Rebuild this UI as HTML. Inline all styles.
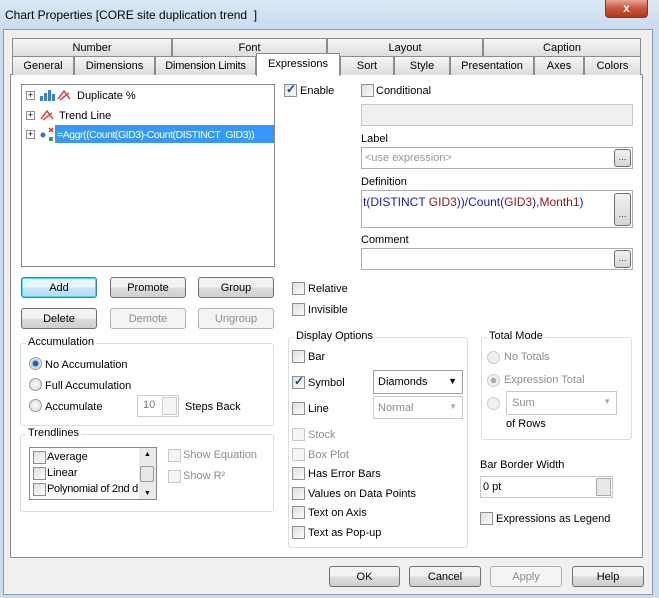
<!DOCTYPE html>
<html><head><style>
*{box-sizing:border-box;margin:0;padding:0}
body{width:659px;height:598px;background:#c9dcf0;font-family:"Liberation Sans",sans-serif;font-size:11px;color:#000;position:relative;overflow:hidden}
.a{position:absolute}
.t{position:absolute;white-space:nowrap;font-size:11px;margin-top:1px}
.tab{position:absolute;height:19px;border:1px solid #8c8c8c;border-bottom:none;background:linear-gradient(#f6f6f6,#dcdcdc);text-align:center;line-height:18px;font-size:11px}
.cb{position:absolute;width:13px;height:13px;border:1px solid #8e8f8f;background:linear-gradient(135deg,#e0e0e0,#fafafa)}
.cb.d{border-color:#c8c8c8;background:#f4f4f4}
.ck::after{content:"✓";position:absolute;left:1px;top:-3px;font-size:12px;color:#27408f;font-weight:bold}
.btn{position:absolute;height:21px;border:1px solid #707070;border-radius:3px;background:linear-gradient(#f2f2f2 50%,#dddddd 50%,#cfcfcf);text-align:center;line-height:21px;font-size:11px}
.btn.dis{border-color:#adb2b5;background:#f4f4f4;color:#8d8d8d}
.grp{position:absolute;border:1px solid #d5dfe5;border-radius:3px}
.gl{position:absolute;background:#fff;padding:0 2px;top:-8px;left:5px;font-size:11px}
.rd{position:absolute;width:13px;height:13px;border-radius:50%;border:1px solid #9a9a9a;background:radial-gradient(#fafafa,#d8d8d8)}
.inp{position:absolute;border:1px solid #abadb3;background:#fff}
.db{position:absolute;width:17px;border:1px solid #707070;border-radius:3px;background:linear-gradient(#f2f2f2,#d5d5d5);font-size:9px;text-align:center;color:#333}
.g{color:#8d8d8d}
</style></head><body>
<div class="a" style="left:0;top:0;width:659px;height:30px;background:linear-gradient(#dae8f5,#c8dbef)"></div>
<div class="t" style="left:5px;top:7px;font-size:12px">Chart Properties [CORE site duplication trend&nbsp; ]</div>
<div class="a" style="left:605px;top:0;width:43px;height:18px;border:1px solid #7a3a2e;border-top:none;border-radius:0 0 4px 4px;background:linear-gradient(#e8a393,#c9543b 50%,#b2381f);color:#fff;text-align:center;font-weight:bold;font-size:12px;line-height:16px">x</div>
<div class="a" style="left:3px;top:29px;width:650px;height:566px;border:1px solid #8c9aaa;background:#f0f0f0"></div>
<div class="a" style="left:10px;top:74px;width:633px;height:484px;background:#fff;border:1px solid #898c95"></div>
<div class="tab" style="left:12px;top:38px;width:160px">Number</div>
<div class="tab" style="left:172px;top:38px;width:155px">Font</div>
<div class="tab" style="left:327px;top:38px;width:156px">Layout</div>
<div class="tab" style="left:483px;top:38px;width:158px">Caption</div>
<div class="tab" style="left:12px;top:56px;width:62px">General</div>
<div class="tab" style="left:74px;top:56px;width:81px">Dimensions</div>
<div class="tab" style="left:155px;top:56px;width:101px;letter-spacing:-0.2px">Dimension Limits</div>
<div class="tab" style="left:340px;top:56px;width:54px">Sort</div>
<div class="tab" style="left:394px;top:56px;width:56px">Style</div>
<div class="tab" style="left:450px;top:56px;width:84px">Presentation</div>
<div class="tab" style="left:534px;top:56px;width:50px">Axes</div>
<div class="tab" style="left:584px;top:56px;width:57px">Colors</div>
<div class="tab" style="left:256px;top:53px;width:84px;height:23px;background:#fff;line-height:20px">Expressions</div>
<div class="a" style="left:21px;top:84px;width:254px;height:183px;border:1px solid #828790;background:#fff"></div>
<div class="a" style="left:26px;top:91px;width:9px;height:9px;border:1px solid #919191;font-size:9px;line-height:7px;text-align:center">+</div>
<div class="a" style="left:40px;top:90px;width:15px;height:11px"><svg width="15" height="11"><rect x="0" y="6" width="3" height="5" fill="#3a7fd0"/><rect x="4" y="3" width="3" height="8" fill="#3a7fd0"/><rect x="8" y="0" width="3" height="11" fill="#3a7fd0"/><rect x="12" y="4" width="3" height="7" fill="#3a7fd0"/></svg></div>
<svg class="a" style="left:57px;top:88px" width="15" height="13"><path d="M1 11 L7 3 L13 11 M3 12 L12 5" stroke="#d24a4a" stroke-width="1.5" fill="none"/></svg>
<div class="t" style="left:77px;top:89px">Duplicate %</div>
<div class="a" style="left:26px;top:111px;width:9px;height:9px;border:1px solid #919191;font-size:9px;line-height:7px;text-align:center">+</div>
<svg class="a" style="left:40px;top:108px" width="15" height="13"><path d="M1 11 L7 3 L13 11 M3 12 L12 5" stroke="#d24a4a" stroke-width="1.5" fill="none"/></svg>
<div class="t" style="left:59px;top:109px">Trend Line</div>
<div class="a" style="left:26px;top:130px;width:9px;height:9px;border:1px solid #919191;font-size:9px;line-height:7px;text-align:center">+</div>
<svg class="a" style="left:40px;top:127px" width="14" height="14"><circle cx="3" cy="8" r="2.5" fill="#3a6fc0"/><rect x="9" y="10" width="4" height="4" fill="#3aa040"/><path d="M9 1 L13 5 M13 1 L9 5" stroke="#d03030" stroke-width="1.3"/></svg>
<div class="a" style="left:55px;top:125px;width:219px;height:18px;background:#3399ff"></div>
<div class="t" style="left:57px;top:128px;color:#fff;letter-spacing:-0.45px;font-size:10.5px">=Aggr((Count(GID3)-Count(DISTINCT&nbsp; GID3))</div>
<div class="btn" style="left:21px;top:277px;width:76px;border-color:#3c7fb1;background:linear-gradient(#eaf6fd 50%,#c4e5f6 50%,#b6dcf2);box-shadow:inset 0 0 0 1px #48d8fb">Add</div>
<div class="btn" style="left:110px;top:277px;width:76px">Promote</div>
<div class="btn" style="left:198px;top:277px;width:76px">Group</div>
<div class="btn" style="left:21px;top:308px;width:76px">Delete</div>
<div class="btn dis" style="left:110px;top:308px;width:76px">Demote</div>
<div class="btn dis" style="left:198px;top:308px;width:76px">Ungroup</div>
<div class="grp" style="left:20px;top:343px;width:254px;height:83px"><div class="gl">Accumulation</div></div>
<div class="rd" style="left:29px;top:357px;background:radial-gradient(#1d5ea8 30%,#9ec6ea 40%,#e8f0f8 70%)"></div>
<div class="t" style="left:45px;top:358px">No Accumulation</div>
<div class="rd" style="left:29px;top:378px"></div>
<div class="t" style="left:45px;top:379px">Full Accumulation</div>
<div class="rd" style="left:29px;top:399px"></div>
<div class="t" style="left:45px;top:400px">Accumulate</div>
<div class="inp" style="left:137px;top:395px;width:42px;height:22px;border-color:#ccc;color:#777;padding:3px 0 0 5px">10</div>
<div class="a" style="left:162px;top:397px;width:15px;height:18px;border:1px solid #ccc;background:#f4f4f4"></div>
<div class="t" style="left:185px;top:400px">Steps Back</div>
<div class="grp" style="left:20px;top:434px;width:254px;height:78px"><div class="gl">Trendlines</div></div>
<div class="a" style="left:29px;top:447px;width:128px;height:53px;border:1px solid #828790;background:#fff;overflow:hidden"></div>
<div class="cb" style="left:33px;top:451px"></div><div class="t" style="left:47px;top:450px">Average</div>
<div class="cb" style="left:33px;top:467px"></div><div class="t" style="left:47px;top:466px">Linear</div>
<div class="cb" style="left:33px;top:483px"></div><div class="t" style="left:47px;top:482px;letter-spacing:-0.3px">Polynomial of 2nd d</div>
<div class="a" style="left:139px;top:448px;width:17px;height:51px;background:#eaeaea"></div>
<div class="a" style="left:140px;top:466px;width:14px;height:16px;border:1px solid #999;border-radius:2px;background:#e8e8e8"></div>
<div class="t" style="left:144px;top:450px;font-size:7px">▲</div><div class="t" style="left:144px;top:489px;font-size:7px">▼</div>
<div class="cb d" style="left:168px;top:449px"></div><div class="t g" style="left:183px;top:448px">Show Equation</div>
<div class="cb d" style="left:168px;top:470px"></div><div class="t g" style="left:183px;top:469px">Show R²</div>
<div class="cb ck" style="left:284px;top:84px"></div><div class="t" style="left:300px;top:84px">Enable</div>
<div class="cb" style="left:361px;top:84px"></div><div class="t" style="left:376px;top:84px">Conditional</div>
<div class="inp" style="left:361px;top:104px;width:272px;height:22px;background:#f0f0f0;border-color:#c8c8c8"></div>
<div class="t" style="left:361px;top:132px">Label</div>
<div class="inp" style="left:361px;top:147px;width:272px;height:22px;color:#9a9a9a;padding:4px 0 0 3px">&lt;use expression&gt;</div>
<div class="db" style="left:614px;top:149px;height:18px;line-height:14px">...</div>
<div class="t" style="left:361px;top:175px">Definition</div>
<div class="inp" style="left:361px;top:190px;width:272px;height:38px;padding:4px 0 0 1px;font-size:12px;white-space:nowrap;overflow:hidden"><span style="color:#1a1aa8">t(DISTINCT </span><span style="color:#8b1a1a">GID3</span><span style="color:#1a1aa8">))/Count(</span><span style="color:#8b1a1a">GID3</span><span style="color:#1a1aa8">),</span><span style="color:#8b1a1a">Month1</span><span style="color:#1a1aa8">)</span></div>
<div class="db" style="left:614px;top:193px;height:33px;line-height:40px">...</div>
<div class="t" style="left:361px;top:233px">Comment</div>
<div class="inp" style="left:361px;top:248px;width:272px;height:22px"></div>
<div class="db" style="left:614px;top:250px;height:18px;line-height:14px">...</div>
<div class="cb" style="left:292px;top:282px"></div><div class="t" style="left:308px;top:282px">Relative</div>
<div class="cb" style="left:292px;top:303px"></div><div class="t" style="left:308px;top:303px">Invisible</div>
<div class="grp" style="left:288px;top:337px;width:180px;height:211px"><div class="gl">Display Options</div></div>
<div class="cb" style="left:292px;top:350px"></div><div class="t" style="left:308px;top:350px">Bar</div>
<div class="cb ck" style="left:292px;top:376px"></div><div class="t" style="left:308px;top:376px">Symbol</div>
<div class="inp" style="left:373px;top:370px;width:90px;height:24px;border-color:#a0a0a0;padding:5px 0 0 4px">Diamonds<span class="a" style="right:5px;top:5px;font-size:9px">▼</span></div>
<div class="cb" style="left:292px;top:402px"></div><div class="t" style="left:308px;top:402px">Line</div>
<div class="inp" style="left:373px;top:396px;width:90px;height:23px;border-color:#c8c8c8;color:#8d8d8d;padding:5px 0 0 4px">Normal<span class="a" style="right:5px;top:5px;font-size:8px;color:#aaa">▼</span></div>
<div class="cb d" style="left:292px;top:428px"></div><div class="t g" style="left:308px;top:428px">Stock</div>
<div class="cb d" style="left:292px;top:448px"></div><div class="t g" style="left:308px;top:448px">Box Plot</div>
<div class="cb" style="left:292px;top:467px"></div><div class="t" style="left:308px;top:467px">Has Error Bars</div>
<div class="cb" style="left:292px;top:487px"></div><div class="t" style="left:308px;top:487px">Values on Data Points</div>
<div class="cb" style="left:292px;top:506px"></div><div class="t" style="left:308px;top:506px">Text on Axis</div>
<div class="cb" style="left:292px;top:526px"></div><div class="t" style="left:308px;top:526px">Text as Pop-up</div>
<div class="grp" style="left:481px;top:337px;width:151px;height:103px"><div class="gl">Total Mode</div></div>
<div class="rd" style="left:487px;top:351px;border-color:#ccc;background:#f0f0f0"></div><div class="t g" style="left:504px;top:350px">No Totals</div>
<div class="rd" style="left:487px;top:374px;border-color:#ccc;background:radial-gradient(#aaa 30%,#f0f0f0 40%)"></div><div class="t g" style="left:504px;top:373px">Expression Total</div>
<div class="rd" style="left:487px;top:397px;border-color:#ccc;background:#f0f0f0"></div>
<div class="inp" style="left:506px;top:391px;width:111px;height:24px;border-color:#c8c8c8;color:#8d8d8d;padding:5px 0 0 5px">Sum<span class="a" style="right:5px;top:5px;font-size:8px;color:#aaa">▼</span></div>
<div class="t" style="left:506px;top:417px">of Rows</div>
<div class="t" style="left:480px;top:458px">Bar Border Width</div>
<div class="inp" style="left:480px;top:476px;width:133px;height:22px;padding:4px 0 0 2px;border-color:#c8c8c8">0 pt</div>
<div class="a" style="left:596px;top:478px;width:15px;height:18px;border:1px solid #aaa;background:#e8e8e8"></div>
<div class="cb" style="left:480px;top:512px"></div><div class="t" style="left:496px;top:512px">Expressions as Legend</div>
<div class="btn" style="left:329px;top:566px;width:71px">OK</div>
<div class="btn" style="left:409px;top:566px;width:72px">Cancel</div>
<div class="btn dis" style="left:490px;top:566px;width:72px">Apply</div>
<div class="btn" style="left:572px;top:566px;width:72px">Help</div>
</body></html>
